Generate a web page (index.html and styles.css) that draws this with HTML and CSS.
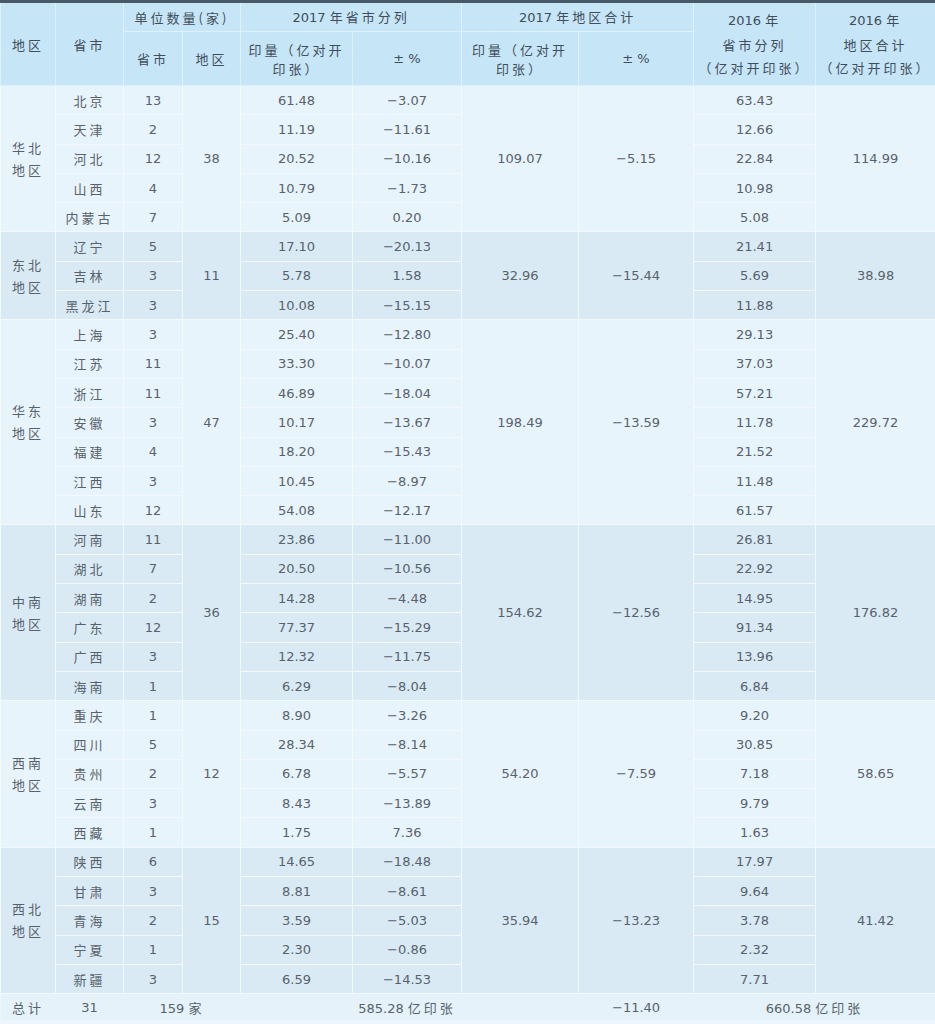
FILE: index.html
```html
<!DOCTYPE html>
<html lang="zh">
<head>
<meta charset="utf-8">
<title>2017 年印量统计</title>
<link rel="stylesheet" href="styles.css">
</head>
<body>
<table class="stats">
  <colgroup>
    <col class="c1"><col class="c2"><col class="c3"><col class="c4"><col class="c5">
    <col class="c6"><col class="c7"><col class="c8"><col class="c9"><col class="c10">
  </colgroup>
  <thead>
    <tr class="h1">
      <th rowspan="2" class="cn">地区</th>
      <th rowspan="2" class="cn">省市</th>
      <th colspan="2" class="cn">单位数量(家)</th>
      <th colspan="2">2017 <span class="cn">年省市分列</span></th>
      <th colspan="2">2017 <span class="cn">年地区合计</span></th>
      <th rowspan="2" class="tall"><span class="ln">2016 <span class="cn">年</span></span><span class="ln cn">省市分列</span><span class="ln cn">（亿对开印张）</span></th>
      <th rowspan="2" class="tall"><span class="ln">2016 <span class="cn">年</span></span><span class="ln cn">地区合计</span><span class="ln cn">（亿对开印张）</span></th>
    </tr>
    <tr class="h2">
      <th class="cn">省市</th>
      <th class="cn">地区</th>
      <th class="cn"><span class="ln">印量（亿对开</span><span class="ln">印张）</span></th>
      <th>± %</th>
      <th class="cn"><span class="ln">印量（亿对开</span><span class="ln">印张）</span></th>
      <th>± %</th>
    </tr>
  </thead>
  <tbody class="light">
    <tr><td rowspan="5" class="cn">华北<br>地区</td><td class="cn">北京</td><td>13</td><td rowspan="5">38</td><td>61.48</td><td>−3.07</td><td rowspan="5">109.07</td><td rowspan="5">−5.15</td><td>63.43</td><td rowspan="5">114.99</td></tr>
    <tr><td class="cn">天津</td><td>2</td><td>11.19</td><td>−11.61</td><td>12.66</td></tr>
    <tr><td class="cn">河北</td><td>12</td><td>20.52</td><td>−10.16</td><td>22.84</td></tr>
    <tr><td class="cn">山西</td><td>4</td><td>10.79</td><td>−1.73</td><td>10.98</td></tr>
    <tr><td class="cn">内蒙古</td><td>7</td><td>5.09</td><td>0.20</td><td>5.08</td></tr>
  </tbody>
  <tbody class="dark">
    <tr><td rowspan="3" class="cn">东北<br>地区</td><td class="cn">辽宁</td><td>5</td><td rowspan="3">11</td><td>17.10</td><td>−20.13</td><td rowspan="3">32.96</td><td rowspan="3">−15.44</td><td>21.41</td><td rowspan="3">38.98</td></tr>
    <tr><td class="cn">吉林</td><td>3</td><td>5.78</td><td>1.58</td><td>5.69</td></tr>
    <tr><td class="cn">黑龙江</td><td>3</td><td>10.08</td><td>−15.15</td><td>11.88</td></tr>
  </tbody>
  <tbody class="light">
    <tr><td rowspan="7" class="cn">华东<br>地区</td><td class="cn">上海</td><td>3</td><td rowspan="7">47</td><td>25.40</td><td>−12.80</td><td rowspan="7">198.49</td><td rowspan="7">−13.59</td><td>29.13</td><td rowspan="7">229.72</td></tr>
    <tr><td class="cn">江苏</td><td>11</td><td>33.30</td><td>−10.07</td><td>37.03</td></tr>
    <tr><td class="cn">浙江</td><td>11</td><td>46.89</td><td>−18.04</td><td>57.21</td></tr>
    <tr><td class="cn">安徽</td><td>3</td><td>10.17</td><td>−13.67</td><td>11.78</td></tr>
    <tr><td class="cn">福建</td><td>4</td><td>18.20</td><td>−15.43</td><td>21.52</td></tr>
    <tr><td class="cn">江西</td><td>3</td><td>10.45</td><td>−8.97</td><td>11.48</td></tr>
    <tr><td class="cn">山东</td><td>12</td><td>54.08</td><td>−12.17</td><td>61.57</td></tr>
  </tbody>
  <tbody class="dark">
    <tr><td rowspan="6" class="cn">中南<br>地区</td><td class="cn">河南</td><td>11</td><td rowspan="6">36</td><td>23.86</td><td>−11.00</td><td rowspan="6">154.62</td><td rowspan="6">−12.56</td><td>26.81</td><td rowspan="6">176.82</td></tr>
    <tr><td class="cn">湖北</td><td>7</td><td>20.50</td><td>−10.56</td><td>22.92</td></tr>
    <tr><td class="cn">湖南</td><td>2</td><td>14.28</td><td>−4.48</td><td>14.95</td></tr>
    <tr><td class="cn">广东</td><td>12</td><td>77.37</td><td>−15.29</td><td>91.34</td></tr>
    <tr><td class="cn">广西</td><td>3</td><td>12.32</td><td>−11.75</td><td>13.96</td></tr>
    <tr><td class="cn">海南</td><td>1</td><td>6.29</td><td>−8.04</td><td>6.84</td></tr>
  </tbody>
  <tbody class="light">
    <tr><td rowspan="5" class="cn">西南<br>地区</td><td class="cn">重庆</td><td>1</td><td rowspan="5">12</td><td>8.90</td><td>−3.26</td><td rowspan="5">54.20</td><td rowspan="5">−7.59</td><td>9.20</td><td rowspan="5">58.65</td></tr>
    <tr><td class="cn">四川</td><td>5</td><td>28.34</td><td>−8.14</td><td>30.85</td></tr>
    <tr><td class="cn">贵州</td><td>2</td><td>6.78</td><td>−5.57</td><td>7.18</td></tr>
    <tr><td class="cn">云南</td><td>3</td><td>8.43</td><td>−13.89</td><td>9.79</td></tr>
    <tr><td class="cn">西藏</td><td>1</td><td>1.75</td><td>7.36</td><td>1.63</td></tr>
  </tbody>
  <tbody class="dark">
    <tr><td rowspan="5" class="cn">西北<br>地区</td><td class="cn">陕西</td><td>6</td><td rowspan="5">15</td><td>14.65</td><td>−18.48</td><td rowspan="5">35.94</td><td rowspan="5">−13.23</td><td>17.97</td><td rowspan="5">41.42</td></tr>
    <tr><td class="cn">甘肃</td><td>3</td><td>8.81</td><td>−8.61</td><td>9.64</td></tr>
    <tr><td class="cn">青海</td><td>2</td><td>3.59</td><td>−5.03</td><td>3.78</td></tr>
    <tr><td class="cn">宁夏</td><td>1</td><td>2.30</td><td>−0.86</td><td>2.32</td></tr>
    <tr><td class="cn">新疆</td><td>3</td><td>6.59</td><td>−14.53</td><td>7.71</td></tr>
  </tbody>
  <tfoot>
    <tr><td class="cn">总计</td><td>31</td><td colspan="2">159 <span class="cn">家</span></td><td></td><td>585.28 <span class="cn">亿印张</span></td><td></td><td>−11.40</td><td colspan="2">660.58 <span class="cn">亿印张</span></td></tr>
  </tfoot>
</table>
</body>
</html>
```

FILE: styles.css
```css
html, body {
  margin: 0;
  padding: 0;
  background: #edf6fc;
}

.stats {
  width: 935px;
  table-layout: fixed;
  border-collapse: collapse;
  border-top: 3px solid #475a68;
  font-family: "DejaVu Sans", "Noto Sans CJK SC", sans-serif;
  font-size: 13px;
  color: #58626c;
}

.c1 { width: 55px; }
.c2 { width: 68px; }
.c3 { width: 59px; }
.c4 { width: 58px; }
.c5 { width: 112px; }
.c6 { width: 109px; }
.c7 { width: 117px; }
.c8 { width: 115px; }
.c9 { width: 122px; }
.c10 { width: 120px; }

.cn {
  font-family: "Noto Sans CJK SC", "DejaVu Sans", sans-serif;
  letter-spacing: 3px;
}

.ln {
  display: block;
  text-align: center;
}

th {
  background: #c6e5f7;
  color: #3f4e5a;
  font-weight: normal;
  text-align: center;
  vertical-align: middle;
  border: 1px solid #e1f1fb;
  padding: 0;
  line-height: 19px;
}

.h1 th { height: 28px; }
.h2 th { height: 53px; }
.h1 th.tall { line-height: 23.5px; padding-top: 0; }

td {
  text-align: center;
  vertical-align: middle;
  padding: 0;
  height: 28.3px;
  border: 1px solid #f3f9fd;
  white-space: nowrap;
}

.light td { background: #e8f4fb; }
.dark td { background: #d9eaf5; }

tbody td.cn[rowspan] { line-height: 22px; }

tfoot td {
  background: #e5f2fa;
  border: none;
  height: 26px;
  border-top: 1px solid #f3f9fd;
}
```
